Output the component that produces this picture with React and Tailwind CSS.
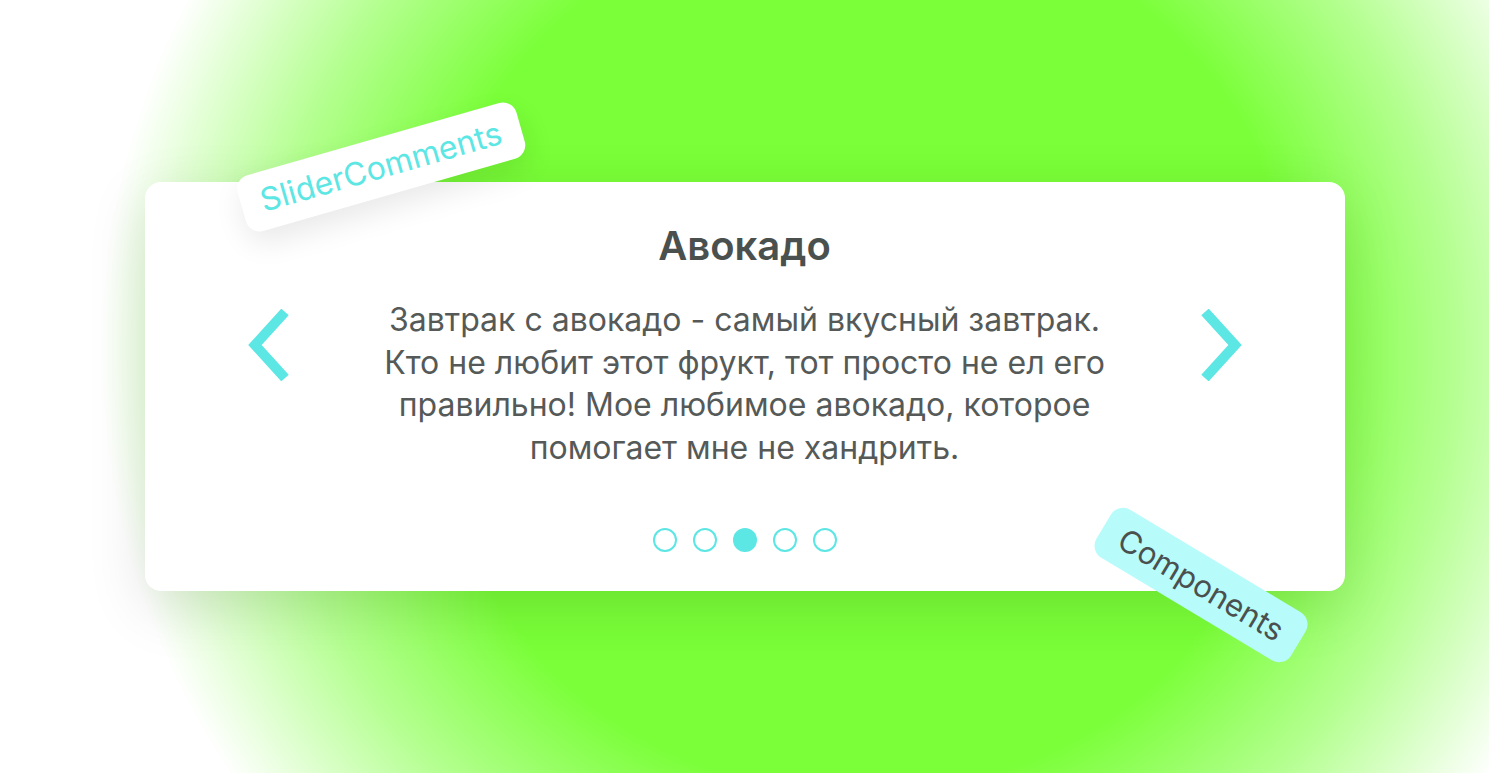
import React from 'react';

const Chevron = ({ dir }) => (
    <svg width="44" height="72" viewBox="0 0 44 72" className="shrink-0 mt-[10px]">
        {dir === 'left' ? (
            <path d="M38 3 L8 36 L38 69" fill="none" stroke="#5ce6e4" strokeWidth="10" />
        ) : (
            <path d="M6 3 L36 36 L6 69" fill="none" stroke="#5ce6e4" strokeWidth="10" />
        )}
    </svg>
);

const App = () => {
    const dots = [0, 1, 2, 3, 4];
    const active = 2;

    return (
        <div className="relative w-[1489px] h-[773px] overflow-hidden bg-white font-['Inter',sans-serif]">
            {/* green glow */}
            <div className="absolute inset-0 bg-[radial-gradient(ellipse_760px_760px_at_860px_350px,#7aff38_0%,#7aff38_58%,#b4ff90_78%,#ffffff_100%)]" />

            <div className="relative flex h-full items-start justify-center pt-[182px]">
                <div className="relative w-[1200px] h-[409px] bg-white rounded-[16px] shadow-[0_16px_60px_rgba(0,0,0,0.12)] flex flex-col items-center pt-[40px]">
                    <h2 className="text-[40px] leading-[48px] font-semibold text-[#4a504e]">Авокадо</h2>

                    <div className="flex w-full items-start justify-between px-[102px] mt-[29px]">
                        <Chevron dir="left" />
                        <p className="w-[800px] text-center text-[32px] leading-[42.5px] text-[#555a58]">
                            Завтрак с авокадо - самый вкусный завтрак.
                            <br />Кто не любит этот фрукт, тот просто не ел его
                            <br />правильно! Мое любимое авокадо, которое
                            <br />помогает мне не хандрить.
                        </p>
                        <Chevron dir="right" />
                    </div>

                    <div className="flex gap-[16px] mt-[59px]">
                        {dots.map((d) => (
                            <div
                                key={d}
                                className={
                                    d === active
                                        ? 'w-[24px] h-[24px] rounded-full bg-[#5ce6e4]'
                                        : 'w-[24px] h-[24px] rounded-full border-2 border-[#5ce6e4]'
                                }
                            />
                        ))}
                    </div>

                    {/* SliderComments tag */}
                    <div className="absolute left-[236px] top-[-15px] -translate-x-1/2 -translate-y-1/2 rotate-[-16deg] bg-white rounded-[14px] px-[20px] py-[9px] shadow-[0_12px_30px_rgba(0,0,0,0.09)] whitespace-nowrap">
                        <span className="text-[32px] leading-[40px] text-[#5ce6e4]">SliderComments</span>
                    </div>

                    {/* Components tag */}
                    <div className="absolute left-[1056px] top-[403px] -translate-x-1/2 -translate-y-1/2 rotate-[31deg] bg-[#b8fbfb] rounded-[14px] px-[20px] py-[8px] whitespace-nowrap">
                        <span className="text-[31px] leading-[40px] text-[#4a504e]">Components</span>
                    </div>
                </div>
            </div>
        </div>
    );
};

export default App;
